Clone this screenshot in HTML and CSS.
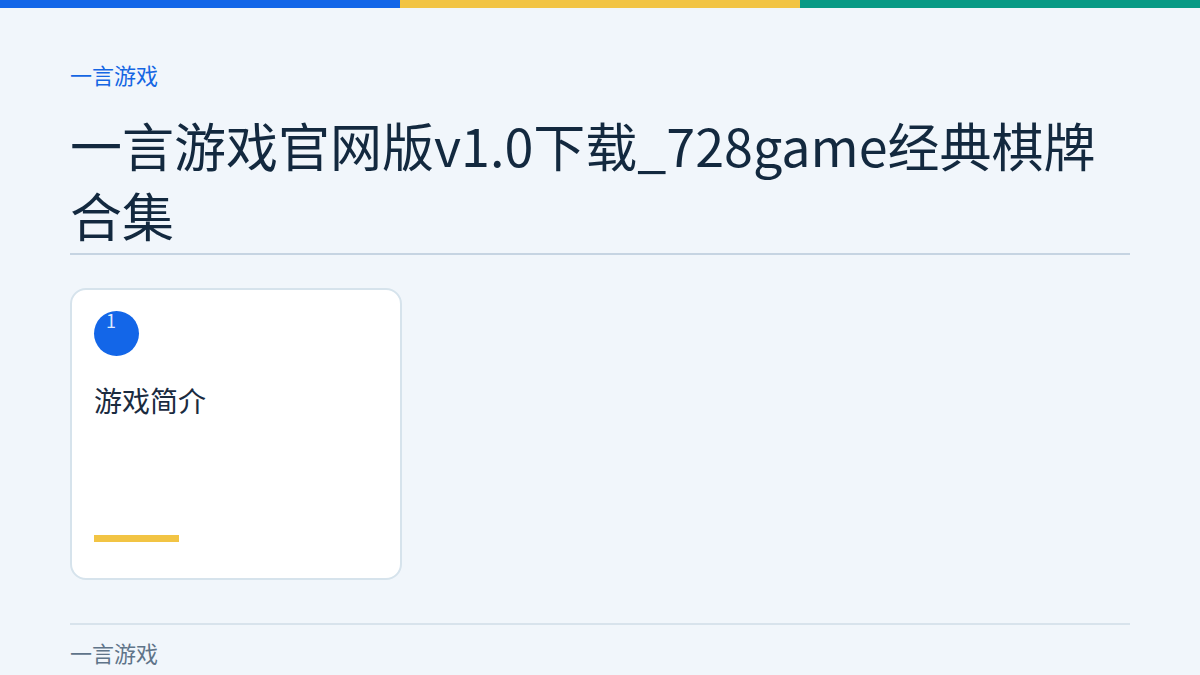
FILE: index.html
```html
<!DOCTYPE html>
<html lang="zh-CN">
<head>
    <meta charset="UTF-8">
    <meta name="viewport" content="width=device-width, initial-scale=1.0">
    <title>一言游戏官网版v1.0下载_728game经典棋牌合集</title>
    <link rel="stylesheet" href="styles.css">
</head>
<body>
    <div class="topbar">
        <span class="blue"></span>
        <span class="yellow"></span>
        <span class="teal"></span>
    </div>

    <div class="container">
        <header class="page-head">
            <div class="brand">一言游戏</div>
            <h1>一言游戏官网版v1.0下载_728game经典棋牌合集</h1>
        </header>

        <section class="cards">
            <article class="card">
                <div class="num"><span>1</span></div>
                <h2>游戏简介</h2>
                <div class="bar"></div>
            </article>
        </section>

        <footer class="foot">一言游戏</footer>
    </div>
</body>
</html>
```

FILE: styles.css
```css
body {
    margin: 0;
    background: #f1f6fb;
    color: #13293f;
    font-family: "Noto Sans CJK SC", "Noto Sans", sans-serif;
}
.topbar {
    display: flex;
    height: 8px;
}
.topbar span {
    flex: 1;
}
.topbar .blue {
    background: #1366e8;
}
.topbar .yellow {
    background: #f2c444;
}
.topbar .teal {
    background: #089a85;
}
.container {
    max-width: 1060px;
    margin: 0 auto;
}
.page-head {
    padding-top: 52px;
    border-bottom: 2px solid #c6d4e2;
}
.brand {
    font-size: 22px;
    line-height: 28px;
    color: #1566e3;
}
h1 {
    font-size: 52px;
    font-weight: 400;
    line-height: 70px;
    margin: 22px 0 3px;
}
.cards {
    display: grid;
    grid-template-columns: repeat(3, 1fr);
    gap: 32px;
    padding: 33px 0 43px;
    border-bottom: 2px solid #d8e3ec;
}
.card {
    background: #fff;
    border: 2px solid #d6e3ec;
    border-radius: 16px;
    padding: 21px 22px 36px;
    min-height: 231px;
    display: flex;
    flex-direction: column;
}
.num {
    width: 45px;
    height: 45px;
    border-radius: 50%;
    background: #1366e8;
}
.num span {
    display: block;
    padding: 2px 0 0 12px;
    font-size: 18px;
    line-height: 14px;
    color: #dce8ff;
}
.card h2 {
    font-size: 28px;
    font-weight: 400;
    line-height: 36px;
    margin: 26px 0 0;
    color: #1a2b3f;
}
.bar {
    margin-top: auto;
    width: 85px;
    height: 7px;
    background: #f2c444;
}
.foot {
    padding-top: 12px;
    font-size: 22px;
    line-height: 30px;
    color: #5f7489;
}
```
